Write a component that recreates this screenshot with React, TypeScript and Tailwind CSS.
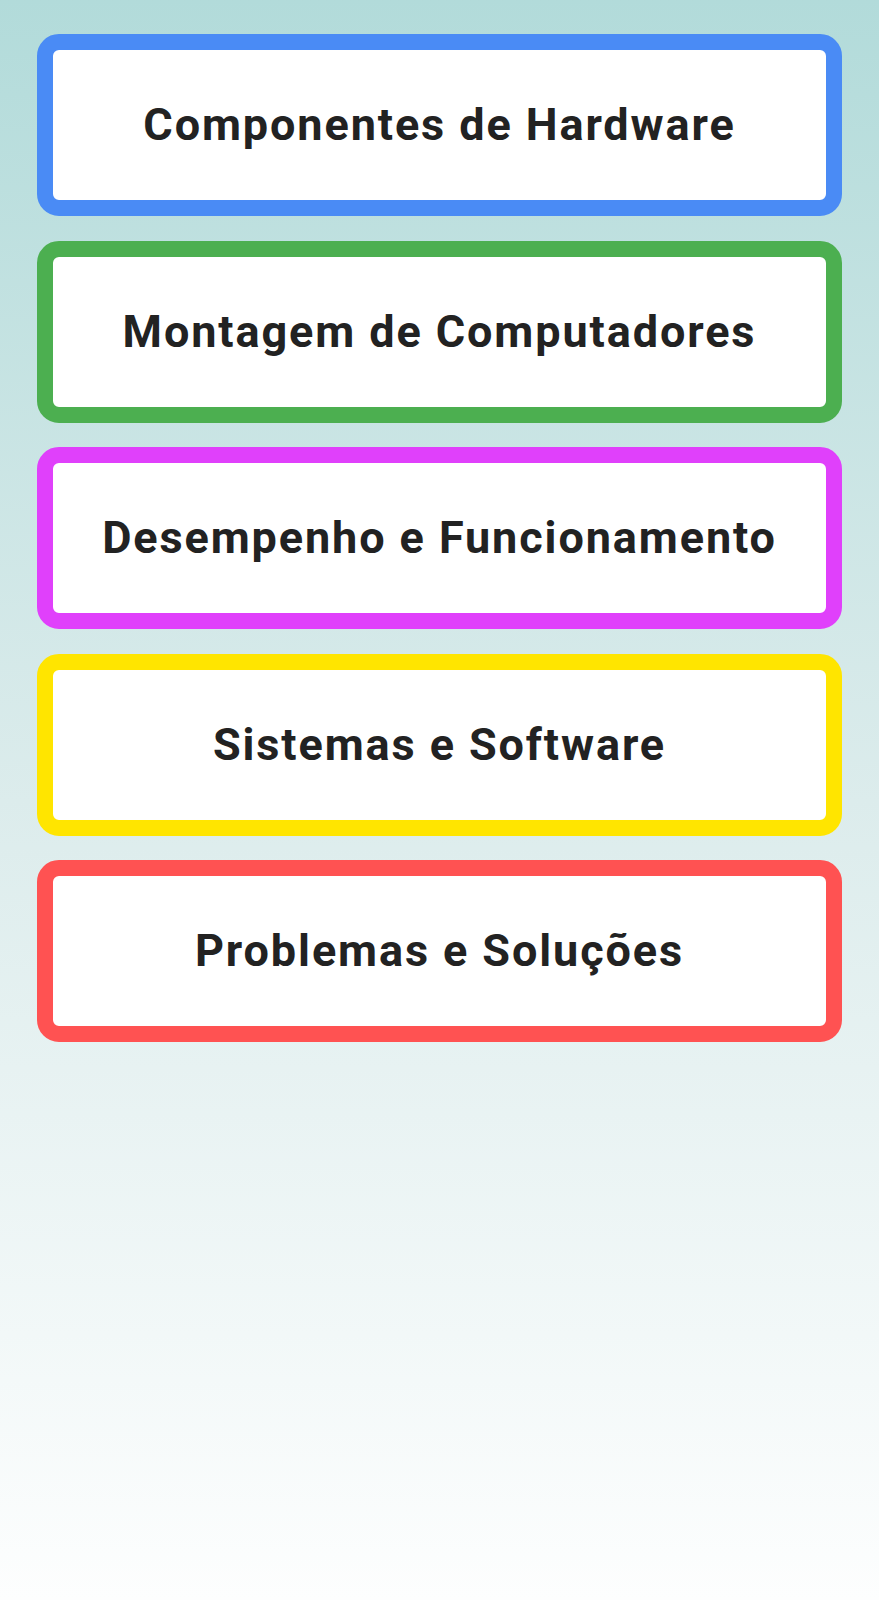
import React from "react";

const topics = [
  { label: "Componentes de Hardware", border: "border-[#4a8bf5]" },
  { label: "Montagem de Computadores", border: "border-[#4caf50]" },
  { label: "Desempenho e Funcionamento", border: "border-[#e040fb]" },
  { label: "Sistemas e Software", border: "border-[#ffe500]" },
  { label: "Problemas e Soluções", border: "border-[#ff5252]" },
];

export default function App() {
  return (
    <main className="min-h-[1600px] w-full bg-gradient-to-b from-[#b2dbda] via-[#dcecec] to-[#fdfefe] font-['Roboto',sans-serif]">
      <section className="flex flex-col gap-[24.5px] px-[37px] pt-[34px]">
        {topics.map((t) => (
          <div
            key={t.label}
            className={`flex h-[182px] items-center justify-center rounded-[22px] border-[16px] bg-white ${t.border}`}
          >
            <span className="text-[45px] font-bold tracking-[1.9px] text-[#222222]">
              {t.label}
            </span>
          </div>
        ))}
      </section>
    </main>
  );
}
